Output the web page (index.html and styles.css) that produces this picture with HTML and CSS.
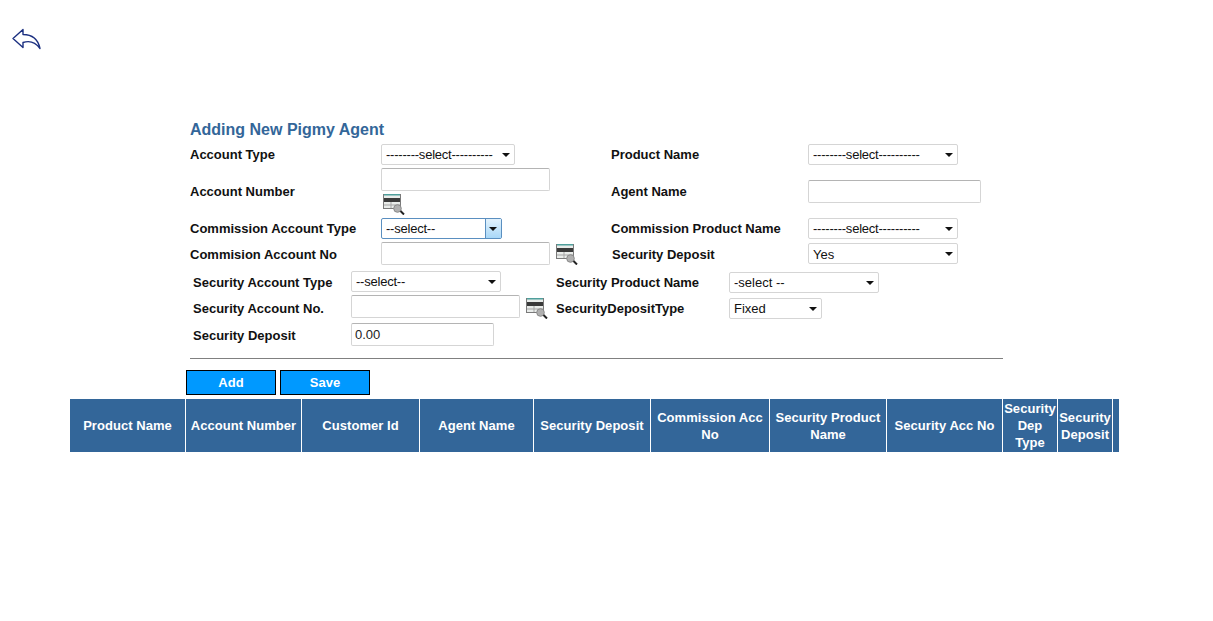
FILE: index.html
```html
<!DOCTYPE html>
<html lang="en">
<head>
    <meta charset="UTF-8">
    <title>Adding New Pigmy Agent</title>
    <link rel="stylesheet" href="styles.css">
</head>
<body>
    <svg class="defs" width="0" height="0">
        <symbol id="lookup" viewBox="0 0 22 22">
            <rect x="0.5" y="1.5" width="17" height="14" fill="#e9ecea" stroke="#7a7a7a"/>
            <rect x="1" y="1" width="16" height="1.5" fill="#4f9f9c"/>
            <rect x="1" y="5" width="16" height="4" fill="#3a3a3a"/>
            <path d="M1 12H17M8 9V15" stroke="#a5a5a5" fill="none"/>
            <circle cx="14.5" cy="15.5" r="3.8" fill="#b0b0b0" stroke="#8a8a8a"/>
            <path d="M17.5 18L21 21.5" stroke="#222" stroke-width="2"/>
        </symbol>
    </svg>

    <a class="back" href="#">
        <svg width="30" height="22" viewBox="0 0 30 22">
            <path d="M1 10.5L11 1.5V6.5C20 6.5 26 11 28 20.5C23 13.5 17 12.5 11 14.5V19.5Z" fill="#fff" stroke="#1b2f80" stroke-width="1.4" stroke-linejoin="round"/>
        </svg>
    </a>

    <div class="container">
        <h1>Adding New Pigmy Agent</h1>

        <div class="form-top">
            <label class="row-a">Account Type</label>
            <div class="field row-a"><span class="select w134"><select class="dashes"><option>--------select----------</option></select></span></div>
            <label class="row-a">Product Name</label>
            <div class="field row-a"><span class="select w150"><select class="dashes"><option>--------select----------</option></select></span></div>

            <label class="row-b">Account Number</label>
            <div class="field stack">
                <input class="w169" type="text">
                <svg class="lookup"><use href="#lookup"/></svg>
            </div>
            <label class="row-b">Agent Name</label>
            <div class="field"><input class="w173" type="text"></div>

            <label class="row-c">Commission Account Type</label>
            <div class="field row-c"><span class="select w121 active"><select class="dashes"><option>--select--</option></select></span></div>
            <label class="row-c">Commission Product Name</label>
            <div class="field row-c"><span class="select w150"><select class="dashes"><option>--------select----------</option></select></span></div>

            <label class="row-d">Commision Account No</label>
            <div class="field row-d">
                <input class="w169" type="text">
                <svg class="lookup"><use href="#lookup"/></svg>
            </div>
            <label class="row-d nudge">Security Deposit</label>
            <div class="field row-d"><span class="select w150"><select class="low"><option>Yes</option></select></span></div>
        </div>

        <div class="form-security">
            <label>Security Account Type</label>
            <div class="field lift-1"><span class="select w150"><select class="dashes"><option>--select--</option></select></span></div>
            <label>Security Product Name</label>
            <div class="field"><span class="select w150"><select><option>-select --</option></select></span></div>

            <label>Security Account No.</label>
            <div class="field lift-2">
                <input class="w169" type="text">
                <svg class="lookup"><use href="#lookup"/></svg>
            </div>
            <label>SecurityDepositType</label>
            <div class="field"><span class="select w93"><select><option>Fixed</option></select></span></div>

            <label class="last-label">Security Deposit</label>
            <div class="field"><input class="w143" type="text" value="0.00"></div>
        </div>

        <hr>
    </div>

    <div class="buttons">
        <button type="button">Add</button>
        <button type="button">Save</button>
    </div>

    <table class="agents">
        <thead>
            <tr>
                <th class="c1">Product Name</th>
                <th class="c2">Account Number</th>
                <th class="c3">Customer Id</th>
                <th class="c4">Agent Name</th>
                <th class="c5">Security Deposit</th>
                <th class="c6">Commission Acc No</th>
                <th class="c7">Security Product Name</th>
                <th class="c8">Security Acc No</th>
                <th class="c9">Security Dep Type</th>
                <th class="c10">Security Deposit</th>
                <th class="c11"></th>
            </tr>
        </thead>
    </table>
</body>
</html>
```

FILE: styles.css
```css
body {
    font-family: "Liberation Sans", Arial, sans-serif;
    font-size: 13px;
    margin: 0;
    padding: 0;
    background: #FFFFFF;
    color: #000000;
}

.defs {
    display: block;
    height: 0;
}

.back {
    display: block;
    width: 30px;
    height: 22px;
    margin: 28px 0 0 12px;
}

.back svg {
    display: block;
}

.container {
    width: 813px;
    margin: 71px 0 0 190px;
}

h1 {
    font-size: 16px;
    line-height: 18px;
    font-weight: bold;
    color: #336699;
    margin: 0 0 5px 0;
}

label {
    font-weight: bold;
    color: #111;
    display: flex;
    align-items: center;
}

.form-top {
    display: grid;
    grid-template-columns: 191px 230px 197px 1fr;
    grid-auto-rows: min-content;
}

.field {
    display: flex;
    align-items: center;
    gap: 6px;
}

.stack {
    flex-direction: column;
    align-items: flex-start;
    gap: 2px;
    padding: 3px 0 2px 0;
}

.stack .lookup {
    margin-left: 2px;
}

.row-a {
    height: 21px;
}

.row-c {
    height: 22px;
}

.row-d {
    height: 27px;
    padding-top: 1px;
}

label.row-d {
    height: 25px;
    padding-top: 3px;
}

.nudge {
    margin-left: 1px;
}

.form-security {
    display: grid;
    grid-template-columns: 158px 205px 173px 1fr;
    grid-template-rows: 26px 26px 27px;
    margin: 2px 0 0 3px;
}

.lift-1 .select {
    margin-bottom: 2px;
}

.lift-2 input {
    margin-bottom: 4px;
}

.last-label {
    padding-top: 2px;
}

input {
    box-sizing: border-box;
    height: 23px;
    font-family: inherit;
    font-size: 13px;
    padding: 1px 3px;
    border: 1px solid #D5D5D5;
    border-top-color: #B4B4B4;
    border-radius: 2px;
    background: #FFFFFF;
    color: #222;
    outline: none;
}

.w169 { width: 169px; }
.w173 { width: 173px; }
.w143 { width: 143px; }
.w150 { width: 150px; }
.w134 { width: 134px; }
.w121 { width: 121px; }
.w93 { width: 93px; }

.lookup {
    width: 22px;
    height: 22px;
    flex: none;
}

.select {
    position: relative;
    display: inline-block;
    box-sizing: border-box;
    height: 21px;
    border: 1px solid #D5D5D5;
    border-radius: 2px;
    background: #FFFFFF;
}

.select select {
    appearance: none;
    display: block;
    width: 100%;
    height: 19px;
    border: none;
    background: transparent;
    font-family: inherit;
    font-size: 13px;
    color: #111;
    padding: 0 0 0 4px;
    outline: none;
}

.select select.dashes {
    letter-spacing: -0.22px;
}

.select select.low {
    padding-top: 2px;
}

.select::after {
    content: "";
    position: absolute;
    right: 4px;
    top: 8px;
    border-left: 4px solid transparent;
    border-right: 4px solid transparent;
    border-top: 4px solid #111;
    pointer-events: none;
}

.select.active {
    border-color: #5A8FC0;
}

.select.active::before {
    content: "";
    position: absolute;
    right: 0;
    top: 0;
    bottom: 0;
    width: 15px;
    border-left: 1px solid #5A8FC0;
    background: linear-gradient(to bottom, #E3F2FC, #A9D8F8);
}

hr {
    border: none;
    border-top: 1px solid #808080;
    margin: 10px 0 0 0;
}

.buttons {
    display: flex;
    gap: 4px;
    margin: 11px 0 0 186px;
}

.buttons button {
    width: 90px;
    height: 25px;
    border: 1px solid #000000;
    background: #0099FF;
    color: #FFFFFF;
    font-family: inherit;
    font-size: 13px;
    font-weight: bold;
    padding: 0;
}

.agents {
    width: 1049px;
    margin: 4px 0 0 70px;
    border-collapse: separate;
    border-spacing: 0;
    table-layout: fixed;
}

.agents th {
    height: 53px;
    padding: 0;
    box-sizing: border-box;
    background: #336699;
    color: #FFFFFF;
    font-size: 13px;
    font-weight: bold;
    line-height: 17px;
    letter-spacing: 0.05px;
    text-align: center;
    border-right: 1px solid #FFFFFF;
}

.agents th:last-child {
    border-right: none;
}

.c1 { width: 116px; }
.c2 { width: 116px; }
.c3 { width: 118px; }
.c4 { width: 114px; }
.c5 { width: 117px; }
.c6 { width: 119px; }
.c7 { width: 117px; }
.c8 { width: 116px; }
.c9 { width: 55px; }
.c10 { width: 55px; }
.c11 { width: 6px; }
```
